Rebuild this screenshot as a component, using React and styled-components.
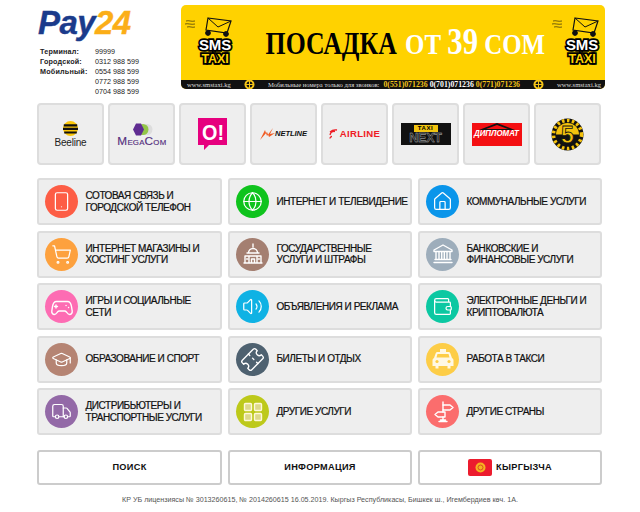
import React from "react";
import styled, { createGlobalStyle } from "styled-components";
import { Smartphone, Globe, Home, ShoppingCart, Volume2, Wallet, GraduationCap, Truck, Ticket } from "lucide-react";

const Global = createGlobalStyle`
  html, body { margin: 0; padding: 0; background: #fff; }
  * { box-sizing: border-box; }
`;
const Page = styled.div`
  width: 640px; height: 512px; overflow: hidden; padding: 5px 35px 0 37px;
  font-family: "Liberation Sans", Arial, sans-serif; color: #000;
`;
const Header = styled.header`display: flex; height: 84px;`;
const Brand = styled.div`width: 144px; flex: none; padding: 2px 0 0 1px;`;
const Logo = styled.div`
  font: italic bold 33px/32px "Liberation Sans", Arial, sans-serif; color: #1b3b8b; letter-spacing: -0.6px; height: 33px;
  -webkit-text-stroke: .4px currentColor;
  span { color: #fbae17; }
`;
const Contacts = styled.dl`
  margin: 7px 0 0 2px; display: grid; grid-template-columns: 55px 1fr; font-size: 7.2px; line-height: 10px;
  dt { font-weight: bold; letter-spacing: .2px; color: #222; }
  dd { margin: 0; color: #222; }
`;
const Banner = styled.div`
  width: 424px; flex: none; height: 84px; border-radius: 5px; overflow: hidden; background: #ffd200; display: flex; flex-direction: column;
`;
const BannerMain = styled.div`flex: 1; min-height: 0; display: flex; align-items: center; padding: 0 5px 0 4px;`;
const SloganBox = styled.div`flex: 1; min-width: 0; display: flex; justify-content: center;`;
const Slogan = styled.div`
  flex: none; margin-left: 26px; padding-top: 1px;
  font: bold 31px/36px "Liberation Serif", "Times New Roman", serif; color: #000; white-space: nowrap; transform: scaleX(.83);
  em { font-style: normal; color: #fff; margin-left: 10px; font-size: 30px; }
  b { font-size: 37px; }
`;
const SmsBlock = styled.div`width: 48px; height: 54px; flex: none; display: flex; flex-direction: column; align-items: flex-end; margin-top: 3px;`;
const SmsWord = styled.div`
  width: 36px; text-align: center; font: 900 ${p => p.$size}px/${p => p.$lh}px "Liberation Sans", Arial, sans-serif; color: ${p => p.$color};
  -webkit-text-stroke: 3.5px #000; paint-order: stroke fill; letter-spacing: -.1px;
`;
const Strip = styled.div`
  height: 9px; flex: none; background: #111; color: #ddd; display: flex; align-items: center; justify-content: space-between; padding: 0 4px 0 6px;
  font: 6.6px/9px "Liberation Serif", serif; white-space: nowrap;
`;
const Phones = styled.span`
  font-weight: bold; font-size: 7.8px; color: #fff; display: flex; gap: 2px; margin-left: 4px;
  i { font-style: normal; color: #f3c318; }
`;
const StripMid = styled.div`display: flex; align-items: center;`;

const Brands = styled.section`display: grid; grid-template-columns: repeat(8, 67px); gap: 4px; margin-top: 14px;`;
const BrandTile = styled.div`
  height: 62px; background: #eee; border: 2px solid #ddd; border-radius: 4px; display: flex; flex-direction: column; align-items: center; justify-content: center;
`;
const BeeText = styled.div`font: 10px/11px "Liberation Sans", sans-serif; color: #222; margin-top: 1px; letter-spacing: -.2px;`;
const MegaText = styled.div`font: 10.5px/10px "Liberation Sans", sans-serif; font-variant: small-caps; color: #55307f; transform: scaleX(1.12); letter-spacing: .2px; -webkit-text-stroke: .15px currentColor;`;
const NetRow = styled.div`display: flex; align-items: center; font: italic 900 7.6px/10px "Liberation Sans", sans-serif; color: #111; letter-spacing: -.1px;`;
const AirRow = styled.div`display: flex; align-items: center; font: bold 9.6px/12px "Liberation Sans", sans-serif; color: #ee1c25; letter-spacing: .3px; gap: 1px;`;
const NextBox = styled.div`width: 50px; height: 22px; background: #111; display: flex; flex-direction: column; align-items: center; padding-top: 2px;`;
const NextTag = styled.div`width: 24px; height: 7px; background: #f2c40f; font: bold 6px/7px "Liberation Sans", sans-serif; text-align: center; letter-spacing: .6px;`;
const NextWord = styled.div`font: bold 12.5px/12px "Liberation Sans", sans-serif; color: #222; -webkit-text-stroke: .4px #bbb; letter-spacing: -.2px;`;
const DiploBox = styled.div`
  width: 50px; height: 23px; background: #f40f12; display: flex; flex-direction: column; align-items: center; overflow: hidden;
`;
const DiploWord = styled.div`font: italic bold 8.6px/9px "Liberation Sans", sans-serif; color: #fff; transform: scaleX(.92); white-space: nowrap; margin-top: -1px;`;

const Categories = styled.nav`display: grid; grid-template-columns: 185px 184px 184px; gap: 5.5px 6px; margin-top: 13px;`;
const Category = styled.a`
  height: 47px; background: #eee; border: 2px solid #ddd; border-radius: 3px; display: flex; align-items: center; padding-left: 6px; gap: 7.5px;
`;
const Circle = styled.span`
  width: 33px; height: 33px; border-radius: 50%; background: ${p => p.$color}; display: flex; align-items: center; justify-content: center; flex: none; color: #fff;
`;
const Label = styled.span`
  font: 10px/11.5px "Liberation Sans", Arial, sans-serif; letter-spacing: -.45px; color: #111; white-space: pre-line; -webkit-text-stroke: .22px #111;
`;

const Actions = styled.div`display: grid; grid-template-columns: 185px 184px 184px; gap: 6px; margin-top: 15px;`;
const Action = styled.button`
  height: 35px; background: #fff; border: 2px solid #ccc; border-radius: 3px; display: flex; align-items: center; justify-content: center; gap: 4px; padding: 0;
  font: bold 9.2px/11px "Liberation Sans", sans-serif; color: #111; letter-spacing: .3px;
`;
const Flag = styled.span`width: 24px; height: 17px; border-radius: 2px; background: #ec1c2e; display: flex; align-items: center; justify-content: center;`;
const Footer = styled.footer`width: 566px; margin-top: 10px; text-align: center; font-size: 7.15px; line-height: 10px; color: #555; white-space: nowrap;`;
const TicketTilt = styled.span`display: flex; transform: rotate(-45deg);`;

const I = { size: 21, strokeWidth: 1.4 };
const Svg = ({ children, size = 22 }) => <svg width={size} height={size} viewBox="0 0 24 24" fill="none" stroke="#fff" strokeWidth="1.4" strokeLinecap="round" strokeLinejoin="round">{children}</svg>;

const Gov = () => <Svg size={24}><path d="M12 2v3M7.5 11a4.5 4.5 0 0 1 9 0M6 11h12M4 14h16M3 21h18M4 14v7M20 14v7M8 14v7M16 14v7M10.5 21v-4h3v4M5.6 17h1M17.4 17h1"/></Svg>;
const Pad = () => <Svg size={24}><path d="M6.5 6.500h11c2.500 0 3.500 2 4 5l.7 4.500c.3 2-1 3.500-2.600 3.500-1.300 0-2-1-3-2.300-.6-.8-1-1.200-2-1.200H9.400c-1 0-1.400.4-2 1.200-1 1.300-1.700 2.300-3 2.300-1.600 0-2.900-1.500-2.600-3.500l.7-4.500c.5-3 1.500-5 4-5z"/><path d="M6 10v3M4.500 11.500h3M16 10.500h.1M18.500 12.500h.1"/></Svg>;
const Bank = () => <Svg size={24}><path d="M12 3 3 8v1.500h18V8zM5 9.500v8M8 9.500v8M10.700 9.500v8M13.300 9.500v8M16 9.500v8M19 9.500v8M4 17.500h16M3 20.500h18"/></Svg>;
const Grid4 = () => <svg width="20" height="20" viewBox="0 0 20 20" fill="#ddd98a" stroke="#fff8d8" strokeWidth="1.4"><rect x="1.500" y="1.500" width="7" height="7" rx="1"/><rect x="11.500" y="1.500" width="7" height="7" rx="1"/><rect x="1.500" y="11.500" width="7" height="7" rx="1"/><rect x="11.500" y="11.500" width="7" height="7" rx="1"/></svg>;
const TaxiCar = () => (
  <svg width="24" height="24" viewBox="0 0 24 24">
    <path d="M9 2h6v3H9z" fill="#fff8e4"/>
    <path d="M6.500 5h11c1 0 1.600.6 1.900 1.500L21 11c1 .6 1.500 1.500 1.500 2.500V19h-3v2.500h-3V19h-9v2.500h-3V19h-3v-5.500c0-1 .5-1.900 1.500-2.500l1.600-4.500C4.900 5.600 5.500 5 6.500 5z" fill="#fff8e4"/>
    <path d="M6.500 7h11l1 3.500h-13z" fill="#fdcd47"/>
    <circle cx="6" cy="14.500" r="1.600" fill="#fdcd47"/><circle cx="18" cy="14.500" r="1.600" fill="#fdcd47"/>
  </svg>
);
const Post = () => (
  <Svg size={24}>
    <path d="M12 2v3M12 10v2M12 17v3M8 21.500h8M9.500 20h5"/>
    <path d="M12 5h7l3 2.500-3 2.500h-7z"/>
    <path d="M12 12H5l-3 2.500L5 17h7z" transform="translate(2 0)"/>
  </Svg>
);
const Tick = () => <TicketTilt><Ticket {...I} size={23} /></TicketTilt>;

const items = [
  ["#fd5d45", <Smartphone {...I} />, "СОТОВАЯ СВЯЗЬ И\nГОРОДСКОЙ ТЕЛЕФОН"],
  ["#0fc31d", <Globe {...I} />, "ИНТЕРНЕТ И ТЕЛЕВИДЕНИЕ"],
  ["#0a95ea", <Home {...I} />, "КОММУНАЛЬНЫЕ УСЛУГИ"],
  ["#fda13e", <ShoppingCart {...I} />, "ИНТЕРНЕТ МАГАЗИНЫ И\nХОСТИНГ УСЛУГИ"],
  ["#a47f71", <Gov />, "ГОСУДАРСТВЕННЫЕ\nУСЛУГИ И ШТРАФЫ"],
  ["#9dadbb", <Bank />, "БАНКОВСКИЕ И\nФИНАНСОВЫЕ УСЛУГИ"],
  ["#fd6cb3", <Pad />, "ИГРЫ И СОЦИАЛЬНЫЕ\nСЕТИ"],
  ["#0fb2e4", <Volume2 {...I} />, "ОБЪЯВЛЕНИЯ И РЕКЛАМА"],
  ["#0bc8a2", <Wallet {...I} />, "ЭЛЕКТРОННЫЕ ДЕНЬГИ И\nКРИПТОВАЛЮТА"],
  ["#b58473", <GraduationCap {...I} />, "ОБРАЗОВАНИЕ И СПОРТ"],
  ["#4e6170", <Tick />, "БИЛЕТЫ И ОТДЫХ"],
  ["#fdcd47", <TaxiCar />, "РАБОТА В ТАКСИ"],
  ["#9369a7", <Truck {...I} />, "ДИСТРИБЬЮТЕРЫ И\nТРАНСПОРТНЫЕ УСЛУГИ"],
  ["#bdc91a", <Grid4 />, "ДРУГИЕ УСЛУГИ"],
  ["#fb6d6d", <Post />, "ДРУГИЕ СТРАНЫ"],
];

const Envelope = () => (
  <svg width="48" height="20" viewBox="0 0 48 20" fill="none" stroke="#111" strokeWidth="1">
    <path d="M1 4c3-1 5 1 9 0M0 7c3-1 6 1 10 0M2 10c3-1 5 1 8 0" strokeWidth=".6"/>
    <path d="M24 1l23 3-4 12-21-3z" strokeWidth="1.200" transform="translate(-1 0)"/>
    <path d="M23 1l10 9 13-6" />
    <circle cx="23" cy="16" r="2.400" fill="#111"/><circle cx="41" cy="17" r="2.400" fill="#111"/>
  </svg>
);
const Sms = () => (
  <SmsBlock>
    <Envelope />
    <SmsWord $size={15} $lh={15} $color="#fff">SMS</SmsWord>
    <SmsWord $size={12.5} $lh={14} $color="#ffd200">TAXI</SmsWord>
  </SmsBlock>
);
const Wheel = () => <svg width="11" height="11" viewBox="0 0 11 11"><circle cx="5.500" cy="5.500" r="5" fill="#f3c318"/><circle cx="5.500" cy="5.500" r="3" fill="#111"/><path d="M5.500 1v9M1 5.500h9" stroke="#f3c318"/></svg>;

const BeeIcon = () => <svg width="15" height="15" viewBox="0 0 15 15"><circle cx="7.500" cy="7.500" r="7.500" fill="#fbc70a"/><path d="M.8 4.300h13.400M0 7.800h15M1.200 11.500h12.600" stroke="#111" strokeWidth="2.200"/></svg>;
const MegaIcon = () => <svg width="22" height="13" viewBox="0 0 22 13"><circle cx="16" cy="6.500" r="5.500" fill="#ddd"/><circle cx="12" cy="6.500" r="5.500" fill="#93c648"/><path d="M5 .5h5l3 6-3 6H5L2 6.500z" fill="#5f2c91"/></svg>;
const OIcon = () => (
  <svg width="30" height="33" viewBox="0 0 30 33">
    <path d="M0 0h29v27H11l-5 5v-5H0z" fill="#e6007e"/>
    <text x="4" y="22" fontFamily="Liberation Sans" fontWeight="bold" fontSize="22" fill="#fff" textLength="22" lengthAdjust="spacingAndGlyphs">O!</text>
  </svg>
);
const NetIcon = () => <svg width="15" height="13" viewBox="0 0 15 13"><path d="M0 12 5 2l2 6 6-8-3 6 5-1-6 4-2-5z" fill="#f05a22"/></svg>;
const AirIcon = () => <svg width="10" height="10" viewBox="0 0 10 10" fill="none" stroke="#ee1c25" strokeWidth="1.300"><path d="M1 9.500a2 2 0 0 1 2-2M1 6a4.500 4.500 0 0 1 5-3.500M1 3a8 8 0 0 1 7-2"/></svg>;
const Roof = () => <svg width="36" height="7" viewBox="0 0 36 7"><path d="M0 7 18 0l18 7z" fill="#111"/><path d="M7 6 18 2l11 4z" fill="#f40f12"/></svg>;
const Five = () => (
  <svg width="33" height="33" viewBox="0 0 33 33">
    <circle cx="16.500" cy="16.500" r="16" fill="#111"/>
    <circle cx="16.500" cy="16.500" r="14" fill="none" stroke="#f4c20d" strokeWidth="3.500" strokeDasharray="2.500 2.500"/>
    <path d="M5 16.500a11.500 11.500 0 0 1 23 0z" fill="#f4c20d"/>
    <text x="16.500" y="25" textAnchor="middle" fontFamily="Liberation Sans" fontWeight="bold" fontSize="23" fill="#f4c20d" stroke="#111" strokeWidth=".8">5</text>
  </svg>
);
const Emblem = () => <svg width="11" height="11" viewBox="0 0 11 11"><circle cx="5.500" cy="5.500" r="5" fill="#f6b221"/><circle cx="5.500" cy="5.500" r="2.500" fill="none" stroke="#d9501e"/></svg>;

export default function App() {
  return (
    <Page>
      <Global />
      <Header>
        <Brand>
          <Logo>Pay<span>24</span></Logo>
          <Contacts>
            <dt>Терминал:</dt><dd>99999</dd>
            <dt>Городской:</dt><dd>0312 988 599</dd>
            <dt>Мобильный:</dt><dd>0554 988 599</dd>
            <dt></dt><dd>0772 988 599</dd>
            <dt></dt><dd>0704 988 599</dd>
          </Contacts>
        </Brand>
        <Banner>
          <BannerMain>
            <Sms />
            <SloganBox><Slogan>ПОСАДКА<em>ОТ <b>39</b> СОМ</em></Slogan></SloganBox>
            <Sms />
          </BannerMain>
          <Strip>
            <span>www.smstaxi.kg</span>
            <Wheel />
            <StripMid>
              <span>Мобильные номера только для звонков:</span>
              <Phones><i>0(551)071236</i> 0(701)071236 <i>0(771)071236</i></Phones>
            </StripMid>
            <Wheel />
            <span>www.smstaxi.kg</span>
          </Strip>
        </Banner>
      </Header>

      <Brands>
        <BrandTile><BeeIcon /><BeeText>Beeline</BeeText></BrandTile>
        <BrandTile><MegaIcon /><MegaText>MegaCom</MegaText></BrandTile>
        <BrandTile><OIcon /></BrandTile>
        <BrandTile><NetRow><NetIcon />NETLINE</NetRow></BrandTile>
        <BrandTile><AirRow><AirIcon />AIRLINE</AirRow></BrandTile>
        <BrandTile><NextBox><NextTag>TAXI</NextTag><NextWord>NEXT</NextWord></NextBox></BrandTile>
        <BrandTile><DiploBox><Roof /><DiploWord>ДИПЛОМАТ</DiploWord></DiploBox></BrandTile>
        <BrandTile><Five /></BrandTile>
      </Brands>

      <Categories>
        {items.map(([color, icon, text]) => (
          <Category key={text}>
            <Circle $color={color}>{icon}</Circle>
            <Label>{text}</Label>
          </Category>
        ))}
      </Categories>

      <Actions>
        <Action>ПОИСК</Action>
        <Action>ИНФОРМАЦИЯ</Action>
        <Action><Flag><Emblem /></Flag>КЫРГЫЗЧА</Action>
      </Actions>
      <Footer>КР УБ лицензиясы № 3013260615, № 2014260615 16.05.2019. Кыргыз Республикасы, Бишкек ш., Игембердиев көч. 1А.</Footer>
    </Page>
  );
}
